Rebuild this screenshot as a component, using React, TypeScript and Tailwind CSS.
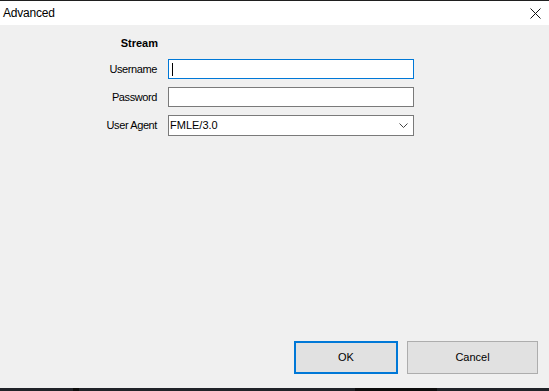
import React from 'react';

// Advanced stream settings dialog
const font = { fontFamily: '"Liberation Sans", Arial, sans-serif' };

function Label({ children }: { children: React.ReactNode }) {
  return (
    <div className="flex items-center justify-end text-[11px] tracking-[-0.4px] text-black leading-none">
      {children}
    </div>
  );
}

export default function App() {
  return (
    <div className="w-[549px] h-[391px] flex flex-col bg-[#f0f0f0] overflow-hidden" style={font}>
      {/* Title bar */}
      <div className="h-[25px] shrink-0 bg-white border-t border-[#1f1f1f] flex items-center justify-between">
        <span className="pl-[3px] text-[12px] tracking-[-0.2px] text-black leading-none">Advanced</span>
        <svg width="11" height="11" viewBox="0 0 11 11" className="mr-[8px] mt-[1px]">
          <path d="M0.5 0.5 L10.5 10.5 M10.5 0.5 L0.5 10.5" stroke="#111" strokeWidth="1" fill="none" />
        </svg>
      </div>

      {/* Body */}
      <div className="flex-1 flex flex-col">
        <div className="grid grid-cols-[158px_246px] gap-x-[10px] mt-[11px]">
          <div className="h-[14px] flex items-center justify-end text-[11px] font-bold text-black leading-none">
            Stream
          </div>
          <div />
        </div>

        <div className="grid grid-cols-[157px_246px] gap-x-[11px] gap-y-[8px] mt-[9px]">
          <Label>Username</Label>
          <div className="h-[20px] bg-white border border-[#0078d7] flex items-center pl-[3px]">
            <div className="w-px h-[13px] bg-black" />
          </div>

          <Label>Password</Label>
          <div className="h-[20px] bg-white border border-[#7a7a7a]" />

          <Label>User Agent</Label>
          <div className="h-[21px] bg-white border border-[#7a7a7a] flex items-center justify-between pl-[1px] pr-[5px]">
            <span className="text-[11px] text-black leading-none">FMLE/3.0</span>
            <svg width="9" height="5" viewBox="0 0 9 5">
              <path d="M0.5 0.5 L4.5 4.5 L8.5 0.5" stroke="#444" strokeWidth="1" fill="none" />
            </svg>
          </div>
        </div>

        {/* Buttons */}
        <div className="mt-auto mb-[14px] flex justify-end gap-[9px] pr-[11px]">
          <button className="w-[104px] h-[33px] bg-[#e1e1e1] border-2 border-[#0078d7] text-[11px] text-black">
            OK
          </button>
          <button className="w-[131px] h-[33px] bg-[#e1e1e1] border border-[#adadad] text-[11px] text-black">
            Cancel
          </button>
        </div>
      </div>

      {/* Taskbar strip behind the window */}
      <div className="h-[3px] shrink-0 bg-[#202328] flex">
        <div className="ml-[73px] w-[6px] bg-[#0d0d0d]" />
        <div className="ml-[276px] w-[82px] bg-[#0d0d0d]" />
      </div>
    </div>
  );
}
